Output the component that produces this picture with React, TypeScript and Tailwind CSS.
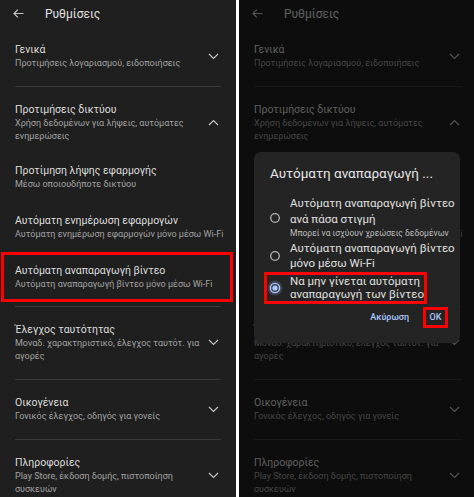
import React from 'react';

type Row = { title: string; sub: string[] };

const Chevron = ({ up }: { up?: boolean }) => (
  <svg width="11" height="7" viewBox="0 0 11 7" className="shrink-0 mr-[2px]">
    <path
      d={up ? 'M1 6 L5.5 1.5 L10 6' : 'M1 1 L5.5 5.5 L10 1'}
      fill="none"
      stroke="#c4c4c4"
      strokeWidth="1.2"
    />
  </svg>
);

const Texts = ({ title, sub }: Row) => (
  <div className="flex-1 min-w-0 whitespace-nowrap">
    <div className="text-[10.5px] leading-[15px] text-[#dedede]">{title}</div>
    {sub.map((s, i) => (
      <div key={i} className="text-[9px] leading-[13px] text-[#a3a3a3]">
        {s}
      </div>
    ))}
  </div>
);

const Divider = () => <div className="mx-[15px] h-px bg-[#3a3a3a]" />;

const Section = ({ title, sub }: Row) => (
  <div className="flex items-center px-[15px] pt-[15px] pb-[16px]">
    <Texts title={title} sub={sub} />
    <Chevron />
  </div>
);

const subItems: Row[] = [
  { title: 'Προτίμηση λήψης εφαρμογής', sub: ['Μέσω οποιουδήποτε δικτύου'] },
  { title: 'Αυτόματη ενημέρωση εφαρμογών', sub: ['Αυτόματη ενημέρωση εφαρμογών μόνο μέσω Wi-Fi'] },
];

const Settings = ({ marked }: { marked: boolean }) => (
  <div className="h-full bg-[#1f1f1f] overflow-hidden">
    <div className="flex items-center h-[27px] pl-[13px]">
      <svg width="11" height="9" viewBox="0 0 11 9">
        <path d="M10.5 4.5 H1 M4.8 0.7 L1 4.5 L4.8 8.3" fill="none" stroke="#c4c4c4" strokeWidth="1.2" />
      </svg>
      <span className="ml-[21px] text-[12px] text-[#e0e0e0]">Ρυθμίσεις</span>
    </div>

    <Section title="Γενικά" sub={['Προτιμήσεις λογαριασμού, ειδοποιήσεις']} />
    <Divider />

    <div className="pt-[15px] pb-[4px]">
      <div className="flex items-center px-[15px]">
        <Texts title="Προτιμήσεις δικτύου" sub={['Χρήση δεδομένων για λήψεις, αυτόματες', 'ενημερώσεις']} />
        <Chevron up />
      </div>
      <div className="mt-[9px]">
        {subItems.map((r) => (
          <div key={r.title} className="px-[15px] py-[11px]">
            <Texts title={r.title} sub={r.sub} />
          </div>
        ))}
        <div
          className={
            marked
              ? 'ml-[1px] w-[232px] border-[3px] border-[#ff0000] px-[11px] py-[8px]'
              : 'ml-[1px] w-[232px] border-[3px] border-transparent px-[11px] py-[8px]'
          }
        >
          <Texts title="Αυτόματη αναπαραγωγή βίντεο" sub={['Αυτόματη αναπαραγωγή βίντεο μόνο μέσω Wi-Fi']} />
        </div>
      </div>
    </div>
    <Divider />

    <Section title="Έλεγχος ταυτότητας" sub={['Μοναδ. χαρακτηριστικό, έλεγχος ταυτότ. για', 'αγορές']} />
    <Divider />
    <Section title="Οικογένεια" sub={['Γονικός έλεγχος, οδηγός για γονείς']} />
    <Divider />
    <Section title="Πληροφορίες" sub={['Play Store, έκδοση δομής, πιστοποίηση', 'συσκευών']} />
  </div>
);

const Radio = ({ on }: { on?: boolean }) =>
  on ? (
    <svg width="16" height="16" viewBox="0 0 16 16" className="shrink-0 -mx-[3px]">
      <circle cx="8" cy="8" r="7.5" fill="#3a4150" />
      <circle cx="8" cy="8" r="4.6" fill="none" stroke="#a8c7fa" strokeWidth="1.4" />
      <circle cx="8" cy="8" r="2.6" fill="#a8c7fa" />
    </svg>
  ) : (
    <svg width="10" height="10" viewBox="0 0 10 10" className="shrink-0">
      <circle cx="5" cy="5" r="4.3" fill="none" stroke="#b4b4b4" strokeWidth="1.3" />
    </svg>
  );

const Dialog = () => (
  <div className="absolute left-[15px] top-[152px] w-[206px] h-[191px] rounded-[7px] bg-[#242424] px-[16px] pt-[12px]">
    <div className="text-[13.5px] leading-[18px] text-[#e6e6e6] whitespace-nowrap">Αυτόματη αναπαραγωγή ...</div>

    <div className="mt-[14px] flex flex-col text-[11.5px] text-[#e0e0e0] whitespace-nowrap">
      <div className="flex items-center gap-[10px]">
        <Radio />
        <div>
          <div className="leading-[15px]">Αυτόματη αναπαραγωγή βίντεο</div>
          <div className="leading-[17px]">ανά πάσα στιγμή</div>
          <div className="text-[8.5px] leading-[11px] text-[#bdbdbd]">Μπορεί να ισχύουν χρεώσεις δεδομένων</div>
        </div>
      </div>
      <div className="mt-[2px] flex items-center gap-[10px]">
        <Radio />
        <div>
          <div className="leading-[15px]">Αυτόματη αναπαραγωγή βίντεο</div>
          <div className="leading-[15px]">μόνο μέσω Wi-Fi</div>
        </div>
      </div>
      <div className="mt-[1px] -ml-[6px] w-[163px] flex items-center gap-[10px] border-[3px] border-[#ff0000] pl-[3px]">
        <Radio on />
        <div>
          <div className="leading-[13px]">Να μην γίνεται αυτόματη</div>
          <div className="leading-[13px]">αναπαραγωγή των βίντεο</div>
        </div>
      </div>
    </div>

    <div className="mt-[3px] flex items-center justify-end text-[9px] font-medium text-[#a8c7fa]">
      <span className="mr-[14px]">Ακύρωση</span>
      <span className="w-[25px] h-[21px] -mr-[4px] flex items-center justify-center border-[3px] border-[#ff0000]">ΟΚ</span>
    </div>
  </div>
);

export default function App() {
  return (
    <div className="flex w-[474px] h-[497px] bg-white font-['Roboto','Noto_Sans',sans-serif]">
      <div className="w-[236px] h-full">
        <Settings marked />
      </div>
      <div className="ml-[3px] flex-1 h-full relative">
        <Settings marked={false} />
        <div className="absolute inset-0 bg-black/[0.58]" />
        <Dialog />
      </div>
    </div>
  );
}
